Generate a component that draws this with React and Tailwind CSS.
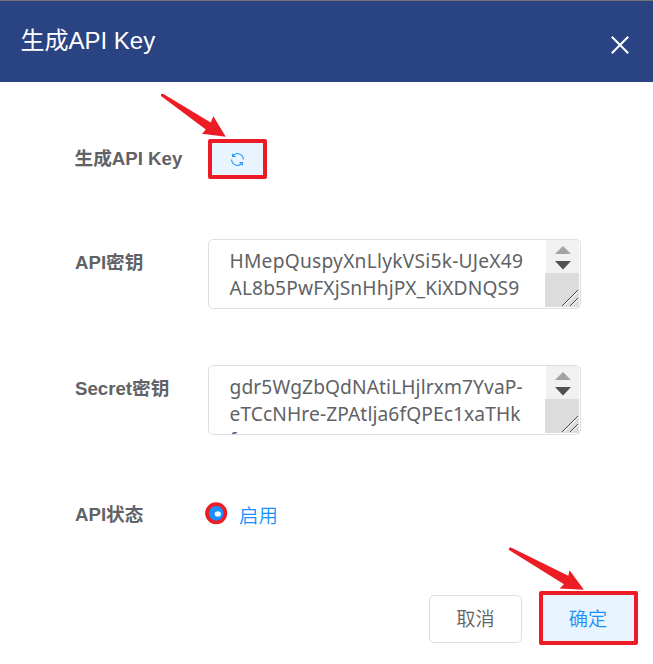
import React from "react";

const sans = "font-['Liberation_Sans','Noto_Sans_CJK_SC',sans-serif]";

function Label({ children }) {
  return (
    <div className="w-[133px] shrink-0 whitespace-nowrap text-[18.67px] leading-[28px] font-bold text-[#606266]">
      {children}
    </div>
  );
}

function KeyField({ lines }) {
  return (
    <div className="flex h-[70px] w-[373px] overflow-hidden rounded-[5px] border border-[#dcdfe6] bg-white">
      <div className="h-full flex-1 overflow-hidden pt-[7px] pl-[20.5px] font-['Noto_Sans',sans-serif] text-[19.2px] leading-[27px] text-[#606266]">
        {lines.map(([text, spacing]) => (
          <div
            key={text}
            className="whitespace-nowrap last:nth-3:-mt-[1px]"
            style={{ letterSpacing: spacing }}
          >
            {text}
          </div>
        ))}
      </div>
      <div className="flex w-[35px] shrink-0 flex-col pr-px pb-px">
        <div className="ml-px h-[33px] bg-[#f1f1f1]">
          <svg width="33" height="33" viewBox="0 0 33 33">
            <path d="M9 14 L17 6 L25 14 Z" fill="#a3a3a3" />
            <path d="M9 21 H25 L17 29.5 Z" fill="#505050" />
          </svg>
        </div>
        <div className="flex-1 bg-[#dcdcdc]">
          <svg width="34" height="34" viewBox="0 0 34 34" fill="none">
            <path d="M18 33.5 L34 17.5 M26 33.5 L34 25.5" stroke="#fff" strokeWidth="1" />
            <path d="M17 33 L33 17 M25 33 L33 25" stroke="#444" strokeWidth="1" />
          </svg>
        </div>
      </div>
    </div>
  );
}

function RefreshIcon() {
  return (
    <svg width="17" height="17" viewBox="0 0 1024 1024" fill="#1890ff">
      <path d="M771.776 794.88A384 384 0 0 1 128 512h64a320 320 0 0 0 555.712 216.448H654.72a32 32 0 1 1 0-64h149.056a32 32 0 0 1 32 32v148.928a32 32 0 1 1-64 0v-50.56zM276.288 295.616h92.992a32 32 0 0 1 0 64H220.16a32 32 0 0 1-32-32V178.56a32 32 0 0 1 64 0v50.56A384 384 0 0 1 896.128 512h-64a320 320 0 0 0-555.776-216.384z" />
    </svg>
  );
}

export default function App() {
  return (
    <div className={`relative flex h-[664px] w-[653px] flex-col overflow-hidden bg-white ${sans}`}>
      <header className="flex h-[82px] shrink-0 items-start justify-between border-t border-[#757575] bg-[#2a4382] pr-[24px] pl-[20.5px] text-white">
        <h1 className="pt-[22px] text-[24px] leading-[36px]">生成API Key</h1>
        <svg className="mt-[35px]" width="18" height="18" viewBox="0 0 18 18" stroke="#fff" strokeWidth="2">
          <path d="M0.8 0.8 L17.2 17.2 M17.2 0.8 L0.8 17.2" />
        </svg>
      </header>

      <main className="flex flex-col pl-[75px]">
        <div className="mt-[57px] flex h-[41px] items-start">
          <div className="-ml-[0.5px] w-[133.5px] pt-[6px]">
            <Label>生成API Key</Label>
          </div>
          <button className="flex h-[40px] w-[59px] items-center justify-center rounded-[2px] border-[4px] border-[#ed1c24] bg-[#e8f4ff]">
            <RefreshIcon />
          </button>
        </div>
        <div className="mt-[59px] flex">
          <div className="pt-[10px]">
            <Label>API密钥</Label>
          </div>
          <KeyField
            lines={[
              ["HMepQuspyXnLlykVSi5k-UJeX49", "0.24px"],
              ["AL8b5PwFXjSnHhjPX_KiXDNQS9", "0.13px"],
            ]}
          />
        </div>
        <div className="mt-[56px] flex">
          <div className="pt-[10px]">
            <Label>Secret密钥</Label>
          </div>
          <KeyField
            lines={[
              ["gdr5WgZbQdNAtiLHjlrxm7YvaP-", "0.1px"],
              ["eTCcNHre-ZPAtlja6fQPEc1xaTHk", "0.1px"],
              ["f", "0px"],
            ]}
          />
        </div>
        <div className="mt-[66px] flex h-[28px] items-start">
          <Label>API状态</Label>
          <svg className="mt-[1px] -ml-[3px]" width="23" height="23" viewBox="0 0 23 23">
            <circle cx="11.2" cy="11.3" r="9.2" fill="#1890ff" stroke="#ed1c24" strokeWidth="3.7" />
            <rect x="9.8" y="9.6" width="6" height="5" rx="2" fill="#fff" />
          </svg>
          <span className="ml-[11px] pt-[1px] text-[19.4px] leading-[28px] font-[350] text-[#1890ff]">启用</span>
        </div>
      </main>

      <footer className="mt-[62px] flex items-center justify-end pr-[15px] text-[19.2px] font-[350]">
        <button className="mt-px flex h-[48px] w-[93px] items-center justify-center rounded-[5px] border border-[#dcdfe6] bg-white pt-[4px] text-[#606266]">
          取消
        </button>
        <button className="ml-[17px] flex h-[54px] w-[99px] items-center justify-center rounded-[2px] border-4 border-[#ed1c24] bg-[#e8f4ff] pt-[5px] pr-[1px] text-[#1890ff]">
          确定
        </button>
      </footer>

      <svg className="absolute top-[90px] left-[158px]" width="70" height="50" viewBox="158 90 70 50">
        <path
          d="M163 93.8 L210.7 122.5 L213.4 116.3 L225.8 136.8 L202 133.8 L205.8 129.5 L161 96 Q160.3 93.2 163 93.8 Z"
          fill="#ed1c24"
        />
      </svg>
      <svg className="absolute top-[544px] left-[506px]" width="80" height="48" viewBox="506 544 80 48">
        <path
          d="M511 547.6 L568.3 575.7 L569.5 570.2 L583.9 589.8 L559.5 588.4 L564 584.3 L509 550 Q508.3 547 511 547.6 Z"
          fill="#ed1c24"
        />
      </svg>
    </div>
  );
}
